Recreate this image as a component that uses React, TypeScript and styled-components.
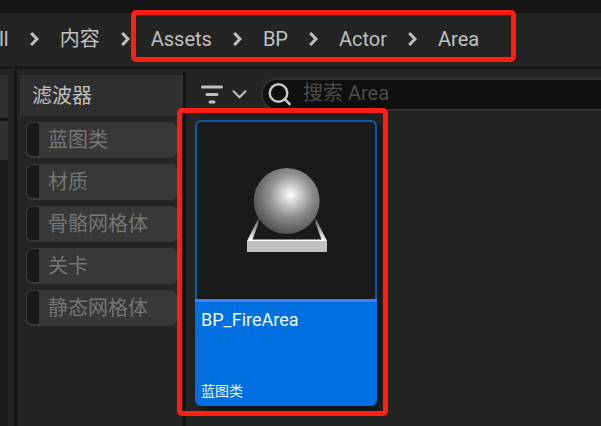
import React from "react";
import styled, { createGlobalStyle } from "styled-components";

const GlobalStyle = createGlobalStyle`
  * { box-sizing: border-box; }
  html, body, #root { height: 100%; }
  body {
    margin: 0;
    overflow: hidden;
    background: #242424;
    color: #c0c0c0;
    font-family: Roboto, "Noto Sans CJK SC", sans-serif;
    font-size: 20px;
  }
  button, input { font: inherit; color: inherit; }
`;

const Window = styled.div`
  display: flex;
  flex-direction: column;
  min-height: 100%;
`;

const TitleStrip = styled.div`
  height: 13px;
  flex: none;
  background: #151515;
`;

const Breadcrumbs = styled.nav`
  display: flex;
  align-items: center;
  gap: 21px;
  height: 56px;
  flex: none;
  padding-bottom: 1px;
  border-bottom: 3px solid #1a1a1a;
  white-space: nowrap;
`;

const Crumb = styled.button<{ $first?: boolean }>`
  flex: none;
  padding: 0;
  border: 0;
  background: none;
  line-height: 24px;
  margin-left: ${(p) => (p.$first ? "-1px" : "0")};
`;

const CrumbGroup = styled.div`
  position: relative;
  display: flex;
  align-items: center;
  gap: 21px;
`;

const Highlight = styled.div<{ $inset: string }>`
  position: absolute;
  inset: ${(p) => p.$inset};
  border: 5px solid #ff1e12;
  border-radius: 5px;
  pointer-events: none;
  z-index: 2;
`;

const Body = styled.div`
  display: flex;
  flex: 1;
`;

const SourcesPane = styled.aside`
  display: flex;
  flex-direction: column;
  width: 8px;
  flex: none;
  padding-top: 6px;
`;

const SourceHeader = styled.div`
  height: 46px;
  background: #2f2f2f;
  border-bottom: 3px solid #151515;
`;

const SourceRow = styled.div`
  height: 39px;
  background: #2f2f2f;
`;

const SourceTree = styled.div`
  flex: 1;
  background: #1a1a1a;
`;

const Splitter = styled.div<{ $before: number; $top?: number }>`
  width: 3px;
  flex: none;
  margin: ${(p) => p.$top ?? 0}px 0 0 ${(p) => p.$before}px;
  background: #151515;
`;

const FilterPane = styled.aside`
  width: 163px;
  flex: none;
  margin-left: 3px;
  padding-top: 6px;
`;

const FilterTitle = styled.h2`
  margin: 0;
  padding: 2px 12px 0;
  background: #2f2f2f;
  font-size: 20px;
  font-weight: 400;
  line-height: 39px;
`;

const FilterList = styled.div`
  display: flex;
  flex-direction: column;
  gap: 6px;
  padding: 6px 6px 0;
`;

const FilterChip = styled.button`
  display: flex;
  height: 36px;
  padding: 0;
  overflow: hidden;
  border: 1px solid #383838;
  border-bottom-width: 2px;
  border-radius: 6px;
  background: #383838;
  color: #757575;
  line-height: 34px;
  text-align: left;
`;

const FilterSwatch = styled.span`
  width: 12px;
  align-self: stretch;
  margin-right: 9px;
  border-radius: 5px 0 0 5px;
  background: #1a1a1a;
`;

const AssetPane = styled.main`
  flex: 1;
  min-width: 0;
  padding-top: 9px;
`;

const Toolbar = styled.div`
  display: flex;
  align-items: center;
  gap: 14px;
  padding-left: 15px;
`;

const FilterMenu = styled.button`
  display: flex;
  align-items: center;
  gap: 9px;
  flex: none;
  padding: 0;
  border: 0;
  background: none;
`;

const SearchBox = styled.label`
  display: flex;
  align-items: center;
  gap: 11px;
  flex: 1;
  min-width: 0;
  height: 33px;
  padding-left: 5px;
  border: 2px solid #2f2f2f;
  border-right: 0;
  border-radius: 16px 0 0 16px;
  background: #0f0f0f;
`;

const SearchInput = styled.input`
  flex: 1;
  min-width: 0;
  height: 28px;
  padding: 0 0 4px;
  border: 0;
  outline: 0;
  background: none;
  &::placeholder { color: #4b4b4b; opacity: 1; }
`;

const AssetGrid = styled.div`
  display: flex;
  padding: 9px;
`;

const AssetTile = styled.article`
  position: relative;
  display: flex;
  flex-direction: column;
  width: 182px;
  border-radius: 6px;
  box-shadow: 4px 4px 6px #00000080;
`;

const Thumbnail = styled.div`
  display: flex;
  justify-content: center;
  height: 179px;
  padding-top: 46px;
  border: 2px solid #0858ab;
  border-bottom: 0;
  border-radius: 6px 6px 0 0;
  background: #1a1a1a;
`;

const AssetInfo = styled.div`
  display: flex;
  flex-direction: column;
  justify-content: space-between;
  height: 107px;
  padding: 6px 6px 5px;
  border-top: 3px solid #4080ff;
  border-radius: 0 0 6px 6px;
  background: #0070e0;
  color: #f2f7fd;
`;

const AssetName = styled.span`
  font-size: 18px;
  line-height: 24px;
`;

const AssetType = styled.span`
  font-size: 14px;
  line-height: 20px;
`;

const Chevron = () => (
  <svg width="9" height="16" viewBox="0 0 9 16" fill="none" aria-hidden="true">
    <path d="M1.200 2 7 8 1.200 14" stroke="#c0c0c0" strokeWidth="3" />
  </svg>
);

const FilterIcon = () => (
  <svg width="22" height="20" viewBox="0 0 22 20" aria-hidden="true">
    <path d="M1.5 2h19M6 9.5h10M9 17h4" stroke="#c0c0c0" strokeWidth="3" strokeLinecap="round" />
  </svg>
);

const DownIcon = () => (
  <svg width="15" height="10" viewBox="0 0 15 10" fill="none" aria-hidden="true">
    <path d="M1.5 1.3 7.5 7.3 13.5 1.3" stroke="#c0c0c0" strokeWidth="2" strokeLinecap="round" />
  </svg>
);

const SearchIcon = () => (
  <svg width="24" height="24" viewBox="0 0 24 24" fill="none" aria-hidden="true">
    <circle cx="10.5" cy="10" r="8.8" stroke="#c8c8c8" strokeWidth="2.4" />
    <path d="m16.7 16.2 5 5" stroke="#c8c8c8" strokeWidth="2.6" strokeLinecap="round" />
  </svg>
);

const BlueprintSphere = () => (
  <svg width="80" height="84" viewBox="-1 0 80 84" overflow="visible" aria-hidden="true">
    <defs>
      <radialGradient id="ball" gradientUnits="userSpaceOnUse" cx="43.5" cy="27" r="42">
        <stop offset="0" stopColor="#fff" />
        <stop offset="0.15" stopColor="#dedede" />
        <stop offset="0.5" stopColor="#929292" />
        <stop offset="0.8" stopColor="#656565" />
        <stop offset="1" stopColor="#484848" />
      </radialGradient>
      <linearGradient id="rail" gradientUnits="userSpaceOnUse" x1="0" y1="50" x2="0" y2="73">
        <stop offset="0" stopColor="#555" />
        <stop offset="1" stopColor="#fff" />
      </linearGradient>
    </defs>
    <path d="M11.5 50 0 73h80L68.5 50v5L74.5 71.500H5.5L11.5 55Z" fill="url(#rail)" />
    <path d="M0 73h80v11H0z" fill="#bfbfbf" />
    <circle cx="39.7" cy="33" r="33" fill="url(#ball)" />
  </svg>
);

const filters = ["蓝图类", "材质", "骨骼网格体", "关卡", "静态网格体"];
const folders = ["Assets", "BP", "Actor", "Area"];

export default function App() {
  return (
    <Window>
      <GlobalStyle />
      <TitleStrip />
      <Breadcrumbs>
        <Crumb $first>ll</Crumb>
        <Chevron />
        <Crumb>内容</Crumb>
        <Chevron />
        <CrumbGroup>
          {folders.map((name, i) => (
            <React.Fragment key={name}>
              {i > 0 && <Chevron />}
              <Crumb>{name}</Crumb>
            </React.Fragment>
          ))}
          <Highlight $inset="-17px -37px -11px -20px" />
        </CrumbGroup>
      </Breadcrumbs>
      <Body>
        <SourcesPane>
          <SourceHeader />
          <SourceRow />
          <SourceTree />
        </SourcesPane>
        <Splitter $before={6} />
        <FilterPane>
          <FilterTitle>滤波器</FilterTitle>
          <FilterList>
            {filters.map((name) => (
              <FilterChip key={name}>
                <FilterSwatch />
                {name}
              </FilterChip>
            ))}
          </FilterList>
        </FilterPane>
        <Splitter $before={0} $top={3} />
        <AssetPane>
          <Toolbar>
            <FilterMenu aria-label="滤波器">
              <FilterIcon />
              <DownIcon />
            </FilterMenu>
            <SearchBox>
              <SearchIcon />
              <SearchInput type="text" placeholder="搜索 Area" aria-label="搜索 Area" />
            </SearchBox>
          </Toolbar>
          <AssetGrid>
            <AssetTile>
              <Thumbnail>
                <BlueprintSphere />
              </Thumbnail>
              <AssetInfo>
                <AssetName>BP_FireArea</AssetName>
                <AssetType>蓝图类</AssetType>
              </AssetInfo>
              <Highlight $inset="-12px -11px -10px -18px" />
            </AssetTile>
          </AssetGrid>
        </AssetPane>
      </Body>
    </Window>
  );
}
